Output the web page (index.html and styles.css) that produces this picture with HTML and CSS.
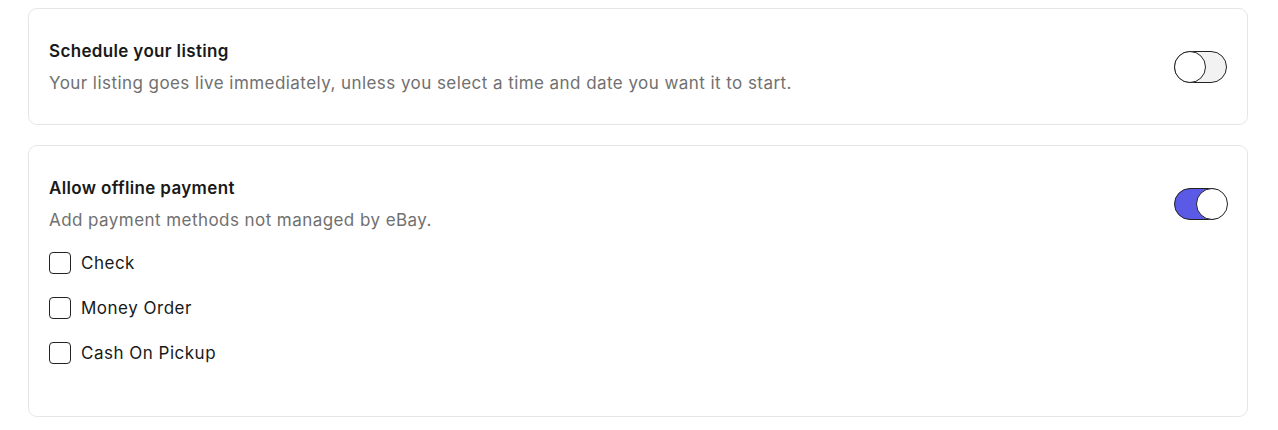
FILE: index.html
```html
<!DOCTYPE html>
<html lang="en">
<head>
<meta charset="utf-8">
<title>Listing options</title>
<link rel="stylesheet" href="styles.css">
</head>
<body>
<main class="page">
  <section class="card">
    <div class="card-head">
      <div class="card-text">
        <h2 class="card-title">Schedule your listing</h2>
        <p class="card-desc">Your listing goes live immediately, unless you select a time and date you want it to start.</p>
      </div>
      <span class="toggle" role="switch" aria-checked="false"><span class="knob"></span></span>
    </div>
  </section>
  <section class="card card-tall">
    <div class="card-head">
      <div class="card-text">
        <h2 class="card-title">Allow offline payment</h2>
        <p class="card-desc">Add payment methods not managed by eBay.</p>
      </div>
      <span class="toggle toggle-on" role="switch" aria-checked="true"><span class="knob"></span></span>
    </div>
    <ul class="options">
      <li class="option"><span class="box"></span><span class="option-label">Check</span></li>
      <li class="option"><span class="box"></span><span class="option-label">Money Order</span></li>
      <li class="option"><span class="box"></span><span class="option-label">Cash On Pickup</span></li>
    </ul>
  </section>
</main>
</body>
</html>
```
FILE: styles.css
```css
* { box-sizing: border-box; }
html, body { margin: 0; padding: 0; background: #fff; }
body {
  font-family: Inter, "Noto Sans", "Liberation Sans", sans-serif;
  color: #191919;
}
.page {
  padding: 8px 30px 0 28px;
  display: flex;
  flex-direction: column;
  gap: 20px;
}
.card {
  border: 1px solid #e6e6e6;
  border-radius: 9px;
  padding: 30px 20px 29px 20px;
}
.card-tall { padding-bottom: 41px; }
.card-head {
  display: flex;
  align-items: center;
  justify-content: space-between;
}
.card-text {
  display: flex;
  flex-direction: column;
  gap: 8px;
}
.card-title {
  margin: 0;
  font-size: 17px;
  line-height: 24px;
  font-weight: 600;
  letter-spacing: 0.35px;
  color: #191919;
}
.card-desc {
  margin: 0;
  font-size: 17px;
  line-height: 24px;
  font-weight: 400;
  letter-spacing: 0.44px;
  color: #707070;
}
.toggle {
  position: relative;
  display: block;
  width: 53px;
  height: 32px;
  border: 1.5px solid #222;
  border-radius: 16px;
  background: #f2f2f2;
  flex: none;
}
.knob {
  position: absolute;
  top: -1.5px;
  left: -1.5px;
  width: 32px;
  height: 32px;
  border: 1.5px solid #222;
  border-radius: 50%;
  background: #fff;
}
.toggle-on { background: #5a5ae6; }
.toggle-on .knob { left: auto; right: -1.5px; }
.options {
  list-style: none;
  margin: 8px 0 0 0;
  padding: 0;
  display: flex;
  flex-direction: column;
}
.option {
  display: flex;
  align-items: center;
  gap: 10px;
  height: 45px;
}
.box {
  width: 22px;
  height: 22px;
  border: 1.5px solid #222;
  border-radius: 4px;
  background: #fff;
  flex: none;
}
.option-label {
  font-size: 17px;
  line-height: 24px;
  letter-spacing: 0.5px;
  color: #191919;
}
```
